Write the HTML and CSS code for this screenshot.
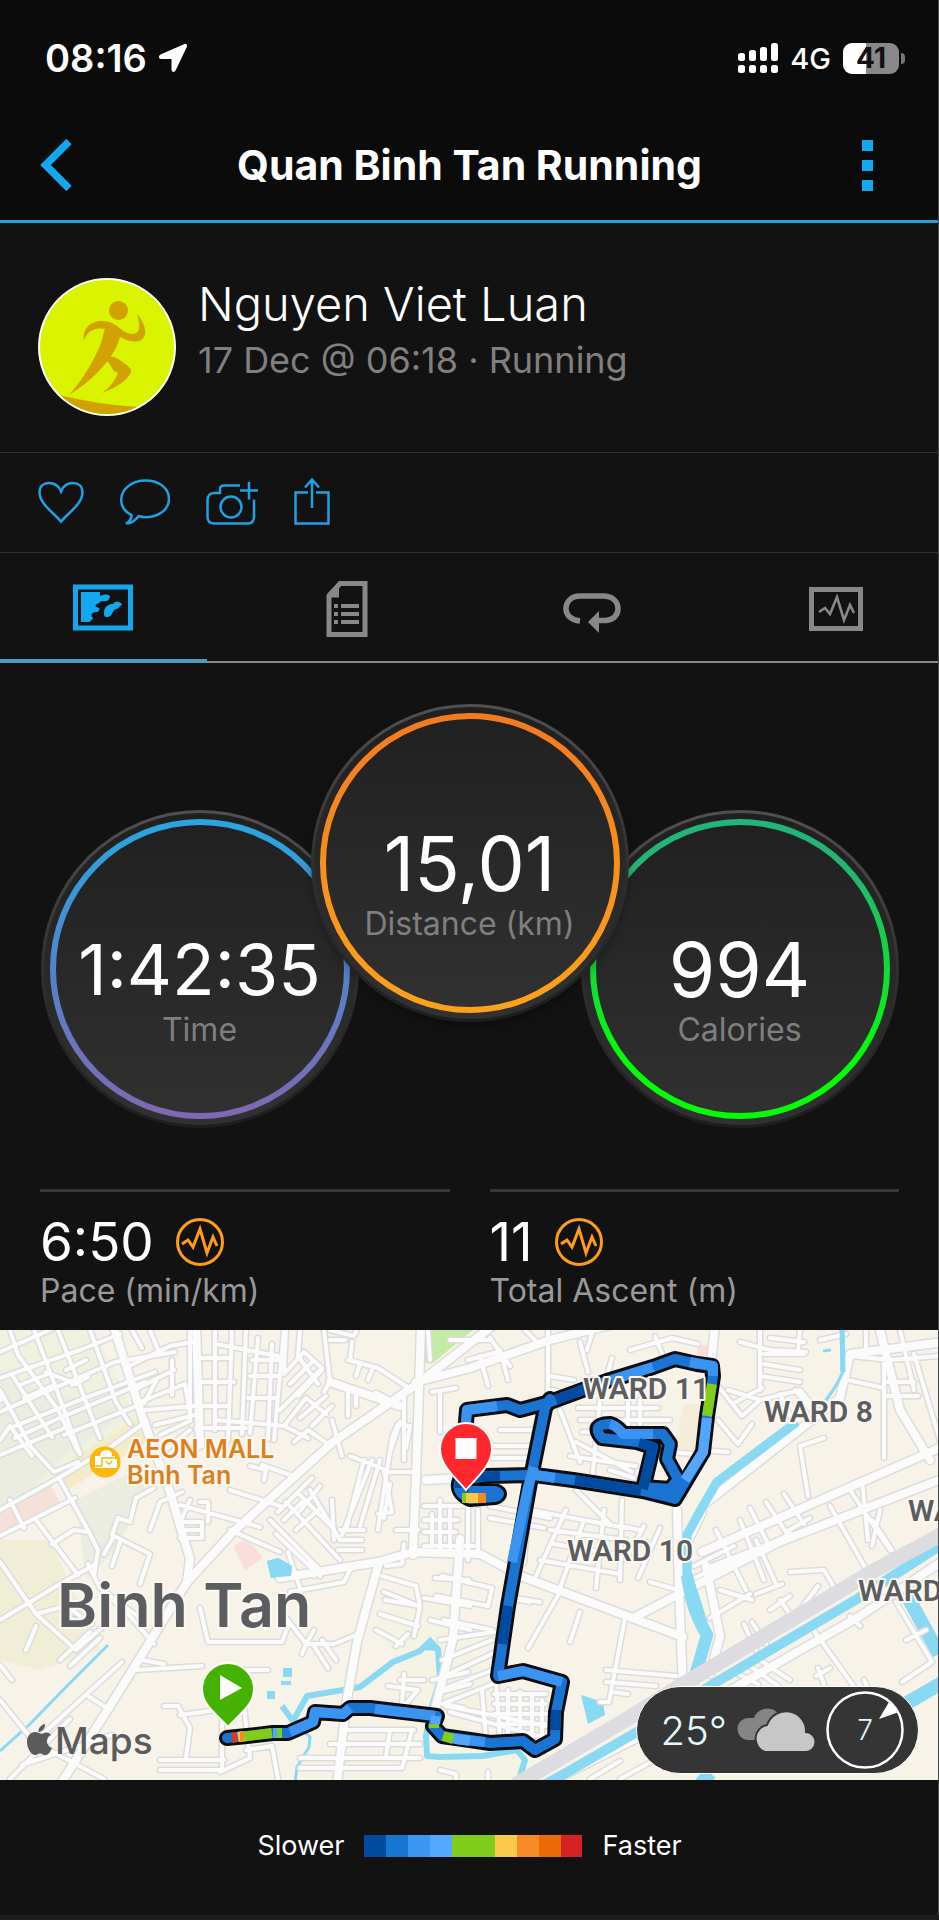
FILE: index.html
```html
<!DOCTYPE html>
<html lang="en">
<head>
<meta charset="utf-8">
<meta name="viewport" content="width=device-width, initial-scale=1">
<title>Quan Binh Tan Running</title>
<link rel="stylesheet" href="styles.css">
</head>
<body>
<div class="screen">
  <header class="header">
    <div class="status">
      <div class="status-left">
        <time class="clock">08:16</time>
        <svg width="30" height="30" viewBox="0 0 30 30" aria-hidden="true"><path d="M26.500 1 2.500 11.500C.3 12.600.6 16 3 16h10.500v10.500c0 2.800 3 3.300 4.200.8L28.800 4c.9-2-.5-3.700-2.300-3z" fill="#fff"/></svg>
      </div>
      <div class="status-right">
        <svg width="40" height="30" viewBox="0 0 40 30" fill="#fff" aria-hidden="true"><rect x="0" y="10" width="7" height="8" rx="2.500"/><rect x="11" y="7" width="7" height="11" rx="2.500"/><rect x="22" y="4" width="7" height="14" rx="2.500"/><rect x="33" y="0" width="7" height="18" rx="2.500"/><rect x="0" y="22" width="7" height="8" rx="2.500"/><rect x="11" y="22" width="7" height="8" rx="2.500"/><rect x="22" y="22" width="7" height="8" rx="2.500"/><rect x="33" y="22" width="7" height="8" rx="2.500"/></svg>
        <span class="network">4G</span>
        <span class="battery"><span class="battery-body">41</span><i class="battery-tip"></i></span>
      </div>
    </div>
    <nav class="titlebar">
      <button class="nav-button" aria-label="Back"><svg width="32" height="52" viewBox="0 0 32 52"><path d="M29 2.500 5.500 26 29 49.500" fill="none" stroke="#12a7ee" stroke-width="7.500"/></svg></button>
      <h1>Quan Binh Tan Running</h1>
      <button class="nav-button nav-more" aria-label="More options"><svg width="11" height="52" viewBox="0 0 11 52" fill="#12a7ee"><path d="M0 1h11v11H0zM0 21h11v11H0zM0 41h11v11H0z"/></svg></button>
    </nav>
  </header>

  <section class="profile">
    <svg class="avatar" viewBox="0 0 138 138" role="img" aria-label="Runner">
      <defs><clipPath id="face"><circle cx="69" cy="69" r="67"/></clipPath></defs>
      <circle cx="69" cy="69" r="69" fill="#fff"/>
      <g clip-path="url(#face)"><path fill="#daf400" d="M0 0h138v138H0z"/>
      <g fill="#d2a203"><circle cx="80.500" cy="32.500" r="9.500"/>
      <path d="M46 63c-2-12 6-20 18-20 9 0 14 4 20 9 8 6 15 5 17-1 1-5-1-10-2-15 6 7 9 14 8 20-2 9-12 10-25 3-3 12-12 25-22 35-9 9-18 16-29 23 14-16 25-34 32-52 2-6 2-10 4-14-9-2-18 1-21 12z"/>
      <path d="M69 83c2-8 10-4 22 6 4 4 2 7-3 12-6 6-14 10-24 14 7-5 13-12 16-20-6-2-6-7-11-12z"/>
      <path d="M20 117c24 5 48 10 80 12l-10 9H20z"/></g></g>
    </svg>
    <div class="who"><h2>Nguyen Viet Luan</h2><p>17 Dec @ 06:18 · Running</p></div>
  </section>

  <section class="actions" aria-label="Actions">
    <button aria-label="Like"><svg width="46" height="50" viewBox="0 0 46 50"><path d="M23 43.500C17 36 1.500 26 1.500 14.500c0-6 4-9.500 9.500-9.500 6 0 10 3.500 12 8.500C25 8.500 29 5 35 5c5.500 0 9.500 3.500 9.500 9.500C44.500 26 29 36 23 43.500z"/></svg></button>
    <button aria-label="Comment"><svg width="50" height="50" viewBox="0 0 50 50"><path d="M11.500 37.200C5 33.700 1.200 28 1.200 22 1.200 11 12 2.500 25.500 2.500S49 10 49 21 38 39.200 25 39.200c-3 0-4.600-.5-6.500-1-3 4-6.500 7.300-12.500 7.300 4-2 5.500-5 5.500-8.300z"/></svg></button>
    <button aria-label="Add photo"><svg width="52" height="50" viewBox="0 0 52 50"><path d="M34 7.500H18c-3 0-4 1-4 4v3.500H9c-5 0-7.500 3-7.500 7v17c0 4.500 3 6.500 7 6.500h33c4.500 0 6.500-3 6.500-7V21.500M34 12.500h18M43 4v17.500"/><circle cx="25" cy="29" r="10.500"/></svg></button>
    <button aria-label="Share"><svg width="36" height="50" viewBox="0 0 36 50"><path d="M14 14.500H1.500v31h33v-31H22M18 30V1.500M11 9.500l7-8 7 8"/></svg></button>
  </section>

  <nav class="tabs" aria-label="Activity views">
    <button class="tab active" aria-label="Map"><svg width="60" height="56" viewBox="0 0 60 56"><path d="M2.500 7h55v41h-55z" fill="none" stroke="#12a7ee" stroke-width="5"/><path d="M8 12h19v4c4-2 8-2 10 0 0 5-5 6-9 5-1 3-7 2-5 6 5 0 4 4 1 5-5 0-7 3-4 6 0 2-3 2-3 4H8zM31 33c0-7 5-9 9-9 2-4 9-2 9 1-3 0-2 4-6 4-4 1-3 8-9 8-3 0-3-2-3-4z" fill="#12a7ee"/></svg></button>
    <button class="tab" aria-label="Details"><svg width="42" height="56" viewBox="0 0 42 56"><path d="M14 2.500h25v51H3V15z" fill="none" stroke="#888" stroke-width="5"/><path d="M13 1v15.500H1V13z"/><path d="M8 23h4v4H8zM15 23h18v4H15zM8 31h4v4H8zM15 31h18v4H15zM8 39h4v4H8zM15 39h18v4H15z"/></svg></button>
    <button class="tab" aria-label="Laps"><svg width="58" height="56" viewBox="0 0 58 56"><path d="M17 40C8 39 3 34 3 28c0-8 6-13 14-13h23c9 0 15 5 15 13 0 7-6 11.500-13 11.500h-8" fill="none" stroke="#888" stroke-width="5.500"/><path d="M36 30v22L25 41z"/></svg></button>
    <button class="tab" aria-label="Charts"><svg width="54" height="56" viewBox="0 0 54 56"><path d="M2.500 8.500h49v39h-49z" fill="none" stroke="#888" stroke-width="5"/><path d="m10 31 6-4 5 6 7-17 7 23 6-15 4 8" fill="none" stroke="#888" stroke-width="2.600"/></svg></button>
  </nav>

  <section class="gauges" aria-label="Summary">
    <div class="gauge gauge-time">
      <svg class="ring" viewBox="0 0 318 318" aria-hidden="true"><defs>
        <linearGradient id="plate" x2="0" y2="1"><stop stop-color="#202020"/><stop offset="1" stop-color="#313131"/></linearGradient>
        <linearGradient id="rim" x2="0" y2="1"><stop stop-color="#505050"/><stop offset=".5" stop-color="#303030"/><stop offset="1" stop-color="#1e1e1e"/></linearGradient>
        <linearGradient id="blue" x2="0" y2="1"><stop stop-color="#2aa5e0"/><stop offset=".5" stop-color="#5284ca"/><stop offset="1" stop-color="#8068b2"/></linearGradient>
        <linearGradient id="orange" x2="0" y2="1"><stop stop-color="#f47a20"/><stop offset="1" stop-color="#fba21c"/></linearGradient>
        <linearGradient id="green" x2="0" y2="1"><stop stop-color="#22b57c"/><stop offset=".15" stop-color="#22b573"/><stop offset=".8" stop-color="#05fb08"/></linearGradient></defs>
        <circle cx="159" cy="159" r="157.500" fill="url(#plate)" stroke="url(#rim)" stroke-width="3"/><circle cx="159" cy="159" r="147" fill="none" stroke="url(#blue)" stroke-width="6"/></svg>
      <div class="reading"><strong class="long">1:42:35</strong><span>Time</span></div>
    </div>
    <div class="gauge gauge-distance">
      <svg class="ring" viewBox="0 0 318 318" aria-hidden="true"><circle cx="159" cy="159" r="157.500" fill="url(#plate)" stroke="url(#rim)" stroke-width="3"/><circle cx="159" cy="159" r="147" fill="none" stroke="url(#orange)" stroke-width="6"/></svg>
      <div class="reading"><strong>15,01</strong><span>Distance (km)</span></div>
    </div>
    <div class="gauge gauge-calories">
      <svg class="ring" viewBox="0 0 318 318" aria-hidden="true"><circle cx="159" cy="159" r="157.500" fill="url(#plate)" stroke="url(#rim)" stroke-width="3"/><circle cx="159" cy="159" r="147" fill="none" stroke="url(#green)" stroke-width="6"/></svg>
      <div class="reading"><strong>994</strong><span>Calories</span></div>
    </div>
  </section>

  <section class="stats" aria-label="Statistics">
    <div class="stat"><div class="stat-top"><strong>6:50</strong><button aria-label="Pace chart"><svg width="48" height="48" viewBox="0 0 48 48"><circle cx="24" cy="24" r="22.500"/><path d="m6 26 6-4 5 7 7-18 7 24 6-16 4 9"/></svg></button></div><span class="stat-label">Pace (min/km)</span></div>
    <div class="stat"><div class="stat-top"><strong>11</strong><button aria-label="Ascent chart"><svg width="48" height="48" viewBox="0 0 48 48"><circle cx="24" cy="24" r="22.500"/><path d="m6 26 6-4 5 7 7-18 7 24 6-16 4 9"/></svg></button></div><span class="stat-label">Total Ascent (m)</span></div>
  </section>

  <section class="map" aria-label="Route map">
    <svg class="map-canvas" viewBox="0 0 939 450" preserveAspectRatio="xMidYMid slice">
      <defs>
        <g id="minor">
          <!-- north-west district -->
          <path d="M0 22 50 0M0 48 80 20 120 4M0 82l50-22 65-28 60-10M10 98l75-30 70-26M15 108l40-18 90-38M0 60l30 55M12 45l40 62M10 0l8 25 40 55 20 42M34 0l22 58 24 66M58 0l42 108M90 0l26 72 14 22M0 110l10-14 22 30M0 125l65-27M30 116l24 26 24-10M64 105l80-32 12-22M20 55l30-12M24 68l28-12M46 42l30 12M66 40l20-10M72 55l16-8"/>
          <path d="M0 180 62 146l50-30 35-25M10 170l14 28M0 206l75-38M36 190l42 55M52 214l22-14 14 2M60 150l28 50 10 20-4 26M0 290l60-36 36-20M0 232l36 52 40 36 30-26M36 284l30-8 26 18M26 320l10-24M12 350l-12-15M0 370l34 42 88-80M34 412l70 37M10 449l60-60M22 435l90-30M60 330l30-28M70 336l30-28M88 234l12 24 30 28 24 28M100 258l40 30M118 188l12 4 6-24 18-10M112 205l6-17M104 224l10-18 36 18-10 30M120 212l-8 24M150 200l10-28 22-10"/>
          <path d="M125 38l45-22 22-4M134 60l40-20M140 72l45-18 5 30M145 80l48-4M155 95l40-10M160 105l30-14M165 120l25-20M190 0v90M172 30v35M150 0l8 20M132 0l10 18M192 76h36M200 28h30M198 52h36M196 98h50M215 0v100M232 0l-4 110M246 0l-4 104M258 8l-8 95M272 14l-4 95M284 0l-10 110M216 14l62 12M252 30h30M250 46h28M248 68h28M216 90l68 6 24 12M284 96l22-28 20 16M284 44l20-22 18 16M290 54l22-22M298 66l24-26M280 80l40-40M300 88l26-22M312 96l20-20M294 112l14-12 20 14M286 0l-2 40M300 0l-2 26 20 28"/>
          <path d="M324 0l6 52 60 20M330 52l-6 10M352 12l-2 18 14 4M360 34l-4 12M372 40l-4 10M348 30l30 8 34 22M348 60v26M356 62v14M330 10h15M332 90l10 36M350 126l36 14M392 108l-14 92M400 92l-10 30M392 108l6-14 12 2-4 22M364 130l-18 70M380 130l-20 66M372 130l-30 75M384 140l8 42-14 2M390 142h28M396 200h22M404 60v70M440 62v40M390 154l-6 34M180 175l80 22M190 170l-8 18M200 172h8v20M180 192h22v16h-22M180 200h20M230 160l50 16M250 136l16 4-2 10M262 135l34 12M286 172l54 58M270 190l50 50M300 165l34 34M310 160l30 50M278 182l34-34M284 190l20-20M296 200l22-20M276 204l44 42M320 156l-20 25M334 210l-2-40M340 200h24M340 210h22M338 220h24"/>
          <path d="M330 0l24 6 8-18M428 0l2 30M450 10h40M432 62l24-4M468 30l30-8M480 26l8 30M500 20l8 30M490 8l20 28M525 0l10 10M548 0v62M593 0l-6 20M655 6l8 20M630 20l42-12 26 6M612 28l-12 42M580 12l8 30M550 46l24 4M552 60l22 6M578 78h80M580 90h90M582 102h14M500 100h36M490 116h42M486 128h46M576 112l56 30M570 126l66 10M560 80l20 52M600 70l-8 80M628 72v30M640 70v26M610 140l24 8M648 120l46 4"/>
          <!-- centre streets -->
          <path d="M432 184v30M450 180v45M424 190h34M424 202h32M440 170v50M468 170v60M478 180v46M424 176h46M424 216h50M490 176l60 12M490 188l54 10M530 180l96 18M550 200l76 10M554 214l70 12M540 230l80 14M566 180l-30 66M584 190l-24 68M604 180l-8 78M622 170l-2 80M640 200l-20 -4M644 196l-18 34M646 212l-20 4M660 198l-22 50M576 160l34 34M650 252l28 8M560 262l-32 56M580 282l-10 30M625 288l-16 84M606 340l70 6M606 352l50 4M612 362l16 2M600 372h6M530 272l-22 -4"/>
          <path d="M290 248l78-16M290 262l54-10 8-16M288 222l12 36M310 230l4 16M230 200l50 22M200 278l8 34h74l6-16M280 280l26 34 8-14M306 314l28 0 24-10M306 314l-4 10M314 316l14 22M322 310l14 20M136 340l66-4M142 330l22 4M88 366l22 14M180 385l60-8M164 376h14l12 22-4 30M220 340h48M222 390v50M244 378l6 50-30 14M246 420l26 -4 6 33M160 430h64M160 440h60M300 428h120M300 438h100M330 414h90M344 400h70M385 270l35 6M380 284l38 12M382 246l34 10 4 20-6 30M384 262l30 12M376 300l26 14M396 316l12-12M386 236l16-2 2-20M400 350h24M404 344l-2 30M388 356l30 4-12 14M390 400l-4 26M412 400l-10 38M435 248l34 2M424 268l46 8M430 290l40 10M432 350l36-8M440 362l30-8M444 374l20 4"/>
          <path d="M442 246l50 12-4 18-52-10M444 290l48 10M440 310l54-8M442 330l50-20M444 346l52-24M446 358l52-20M442 374l56-22M446 376l100 20M450 382l96 26M482 360l4 50M496 350l4 60M508 360v48M520 362v48M532 364v44M542 370v38M494 364h52M494 374h52M494 384h52M494 394h52M440 440l16 4v6M488 442v8M516 268l24 4"/>
          <!-- eastern streets -->
          <path d="M760 0v60M740 12l30 8 36 2M770 8l34 4M764 24h40M764 34l36 6M760 46l40 6M800 0l-2 20M728 60l32 10 40-10 20 24M718 56l24 30 18-16M732 74l30-16M718 90l20 24 14-20M700 120l28 2M780 64l14 30M795 60l18 22M850 26l40 4 49-4M884 28v100M914 24l30 100M884 66h34M884 52h30M848 50l36 8M900 0l14 60M820 10l26 -6M866 0v18M800 116l24-8M800 116l8 50M784 164l20 30M766 172l20 30 24-14M750 178l20 40M830 176l40 70M850 160l40 60M862 150l6 60M872 190l20 30M880 180l-8 36M756 210l20 44M716 200l30 60M740 190l24 60M694 236l40-20M690 250l26-12M710 288l40-24M720 260l32 10M790 242l34-2 14 24M756 264l26 -10M770 280l20-14M780 270l10 14M800 280l18-24M744 294l12 26M752 292l14 22M812 298l50 70M896 272l36 60-30 20M906 310l20 -10M850 286l10 10M816 346l14 -8M826 360l-8 -22M864 350l12 24M760 330l30 20M750 336l28 20M738 344l20 10M710 426l30 14M620 449l40 -22M590 449l30-18"/>
        </g>
        <g id="major">
          <path d="M500-10 420 52 333 112 233 202 187 252 110 376 60 455"/>
          <path d="M113-5 143 89 170 162 190 229 187 252M196-5l4 120"/>
          <path d="M421-5 418 90 413 225M396 75l-20-10M330 52l70 24M416 52l54-14 80-28 60-15"/>
          <path d="M280 248l98-16 35-10 67 2 43 23 104 39 56 21M378 236l-21 76-10 57-10 85M460 209l-7 100-20 78"/>
          <path d="M790 206 683 262l-50 26M677 180l2 80 4 100M715-5l-8 80"/>
          <path d="M707 172 840 68l10-44 94-12M702 222 944 116M707 240 944 148M702 182l-24 50M706 236l14 70-10 38"/>
          <path d="M544 455 720 366 860 286 944 230M0 68l-20-5M880 0l20 80 30 50M426 150l36-2M550 72l-22 90-6 70"/>
        </g>
        <g id="river">
          <path d="M842-5l1 47" stroke-width="5"/><path d="M843 42q-8 18-22 34" stroke-width="3"/><path d="M797 92 717 152 703 176 687 205v37l20 64-14 42" stroke-width="9"/><path d="M687 245q4 34 20 60l-14 48" stroke-width="12"/>
        </g>
        <g id="track">
          <path d="M227 408l20-2 26-3 15 0 25-11 2-10 28 2 7-6h20l67 8-4 10 9 10 28 4 20 3 33-2 12 9 20-11 1-27 6-30-39-11-25 5 10-70 10-56 12-68 15-74 5-9"/>
          <path d="M466 92l1-12 40-5 13 5 30-8 57-21 46-14 22-8 22 5 15 2 1 10-6 40-4 36-28 47-32-8-70-11-38-5-48 1-27 4q-5 12 10 19l25-2q8-3 0-6l-22 0"/>
          <path d="M643 159l10-42-16-5-35-4q-12-14 8-14 7 2 13 10l40 0 7 10-3 15 11 20-8 10-27-2"/>
        </g>
      </defs>
      <path fill="#f8f3e9" d="M0 0h939v450H0z"/>
      <path fill="#f0f2e0" d="M0 0h95l45 95-78 52-62 36z"/><path fill="#eaede0" d="M0 50 130 80 60 130 0 190zM76 170l60-30 10 20-30 60-30 30z"/><path fill="#f1eed8" d="M0 210h50l50 110-60 20-40-10z"/><path fill="#f4f3e4" d="M378 290l70-40 40 120-60 80h90l10-24-110-30z"/>
      <path fill="#f4ebc9" d="M58 138 135 90l12 22-80 48z"/><path fill="#f6e1d8" d="M0 176 48 150l12 22-60 36z"/>
      <path fill="#fadedd" d="M233 216l14-8 16 20-18 12zM697 15h12v14h-12z"/><path fill="#f5ecda" d="M684 74h20l-10 52-20-8z"/>
      <path fill="#c5eaa5" d="M427 0h46l-40 33h-10z"/>
      <g class="water">
        <use href="#river"/>
        <path d="M282 376l11 15 14-25 30-5 23-4 33-25 27-11 10-10 8 8 2 30-8 27-6 30 1 20 13 1 43-1 34-6 8 10-5 16" stroke-width="6"/>
        <path d="M293 391l17 16-1 10-12 20-2 16M108 315 67 356 30 394 0 421M856 27l50-7M823 21l8-1" stroke-width="3"/>
        <path class="lake" d="M267 231l11-3 14 8-1 10-20 2zM283 338h9v9h-9zM281 351h10v4h-10zM267 361h8v8h-8zM581 365l22 7 2 13-17 9zM420 320l11-13 8 14zM72 286l5-2-1 4z"/>
        <path d="M905 262l34 62M900 377l45-26M700 455l10-12" stroke-width="14"/>
      </g>
      <use href="#minor" class="road" stroke="#dcdcdd" stroke-width="7"/>
      <use href="#major" class="road" stroke="#dcdcdd" stroke-width="11"/>
      <use href="#minor" class="road" stroke="#fbfbfb" stroke-width="4"/>
      <use href="#major" class="road" stroke="#fbfbfb" stroke-width="8"/>
      <path class="lake" fill="#89d9f2" d="M267 231l11-3 14 8-1 10-20 2z"/>
      <g class="water"><use href="#river"/><path d="M944 213 857 269 767 322 710 356 637 402 545 455" stroke-width="10"/></g>
      <path d="M944 203 870 243 680 356 627 389 515 455" fill="none" stroke="#dcdce1" stroke-width="15"/>
      <use href="#track" class="road" stroke="#0a0d12" stroke-width="16"/>
      <use href="#track" class="road" stroke="#1c74d2" stroke-width="10"/>
      <g class="speed">
        <path stroke="#3b94f2" d="M290 402l23-10 2-10 28 2 7-6M375 379l60 7M485 412l-30-3M498 346l25-5 39 11M512 232l16-75 6-20M466 92l1-12 30-4M612 50l41-13M690 32l23 4v10M610 94q7 2 13 10l30 0M535 145l20 3"/>
        <path stroke="#55a6fa" d="M436 386l-1 8M450 408l20 3M707 88l-4 34-18 28M273 403h4"/>
        <path stroke="#004a9f" d="M556 70l30-12M508 276l-6 38M555 400l1-20M575 150l66 11M643 159l10-42-14-4M470 147l30-1M460 150v8"/>
        <path stroke="#82cc1b" d="M240 407l32-4M277 403h5M712 54l-5 32M434 394v4M443 406l10 3M462 168h5"/>
        <path stroke="#e43723" d="M232 408l5-1"/><path stroke="#fbc84a" d="M238 407l6-1M466 168l14 0"/><path stroke="#f78921" d="M240 406h4M478 168h8"/>
      </g>
      <g class="pin"><path fill="#ff282c" d="M466 160C456 148 440 136 440 119a26 26 0 0 1 52 0c0 17-16 29-26 41z"/><path fill="#fff" stroke="none" d="M455.500 108h21v21h-21z"/></g>
      <g class="pin"><path fill="#46b200" d="M228 397C218 385 202 376 202 359a26 26 0 0 1 52 0c0 17-16 26-26 38z"/><path fill="#fff" stroke="none" d="M220 345v25l22-12z"/></g>
      <circle cx="105" cy="132" r="15.500" fill="#fcb70a"/><path fill="#fff" d="M95 126h5q1-7 7-6t5 6h3v3h2v9H95z"/><path d="M94 136h8v-8h14" fill="none" stroke="#fcb70a" stroke-width="1.500"/><path d="M106 131q3 6 6 0" fill="none" stroke="#fcb70a" stroke-width="1.500"/>
      <g class="poi"><text x="127" y="128">AEON MALL</text><text x="127" y="154">Binh Tan</text></g>
      <text class="city" x="57" y="297">Binh Tan</text>
      <g class="ward"><text x="583" y="69">WARD 11</text><text x="764" y="92">WARD 8</text><text x="567" y="231">WARD 10</text><text x="908" y="191">WARD</text><text x="858" y="271">WARD</text></g>
      <path fill="#5b5b5b" d="M45 394c.5 4-3 8-6.500 8-.5-4 3-7.500 6.500-8zM51 405c-6 3-5 11 1 13-2 5-5 8-8 7-3-2-5-2-8 0-4 1-9-6-9-13 0-9 7-12 12-9 2 1 3 1 5 0 3-1 6 0 7 2z"/>
      <text class="brand" x="55" y="424">Maps</text>
    </svg>
    <div class="weather">
      <span class="temperature">25°</span>
      <svg width="78" height="44" viewBox="0 0 78 44" aria-hidden="true"><path fill="#858585" d="M11 32a11 11 0 0 1 1-22h5A14 14 0 0 1 42 7L32 18l-14 14z"/><path fill="#c7c7c7" stroke="#353535" stroke-width="2" d="M28 44a14 14 0 0 1 2-27A20 20 0 0 1 69 24a10 10 0 0 1-1 20z"/></svg>
      <div class="wind"><svg viewBox="0 0 80 80" aria-hidden="true"><circle cx="40" cy="40" r="37.500" fill="none" stroke="#fff" stroke-width="2.500"/><path fill="#fff" d="M64 12l10 10-20 7z"/></svg><span>7</span></div>
    </div>
  </section>

  <footer class="legend">
    <span>Slower</span>
    <div class="scale" role="img" aria-label="Speed scale"><i class="s1"></i><i class="s2"></i><i class="s3"></i><i class="s4"></i><i class="s5"></i><i class="s5"></i><i class="s6"></i><i class="s7"></i><i class="s8"></i><i class="s9"></i></div>
    <span>Faster</span>
  </footer>
</div>
</body>
</html>
```
FILE: styles.css
```css
* { box-sizing: border-box; }
body { margin: 0; background: #1c1c1c; color: #fff; font-family: Inter, "Liberation Sans", sans-serif; }
h1, h2, p { margin: 0; }
button { padding: 0; border: 0; background: none; color: inherit; font: inherit; cursor: pointer; }
svg { display: block; }

.screen { position: relative; background: #121212; }
.screen::after { content: ""; position: absolute; top: 0; right: 0; bottom: 0; width: 1px; background: #4a4a4a; }

.header { background: #0b0b0b; border-bottom: 3px solid #239fdd; }
.status { display: flex; align-items: center; justify-content: space-between; padding: 36px 34px 0 45px; height: 80px; }
.status-left, .status-right { display: flex; align-items: center; gap: 11px; }
.clock { font-size: 38px; font-weight: 600; line-height: 44px; }
.status-right { gap: 12px; }
.network { font-size: 29px; font-weight: 500; }
.battery { display: flex; align-items: center; gap: 2px; }
.battery-body { width: 56px; height: 31px; border-radius: 9px; background: linear-gradient(90deg, #fff 41%, #888 41%); color: #111; font-size: 28px; font-weight: 700; line-height: 31px; text-align: center; }
.battery-tip { width: 4px; height: 11px; border-radius: 0 4px 4px 0; background: #777; }

.titlebar { display: grid; grid-template-columns: 64px 1fr 64px; align-items: center; height: 140px; padding: 30px 40px 0; }
.titlebar h1 { font-size: 41px; font-weight: 700; line-height: 52px; text-align: center; white-space: nowrap; }
.nav-more { justify-self: center; }

.profile { display: flex; align-items: flex-start; gap: 22px; padding: 55px 38px 36px; border-bottom: 1px solid #303030; }
.avatar { width: 138px; height: 138px; }
.who h2 { font-size: 47px; font-weight: 300; line-height: 52px; }
.who p { margin-top: 8px; color: #808080; font-size: 36px; line-height: 44px; }

.actions { display: flex; align-items: center; gap: 36px; height: 100px; padding: 0 38px; border-bottom: 1px solid #303030; }
.actions svg { fill: none; stroke: #20a2e2; stroke-width: 2.5; }

.tabs { display: flex; justify-content: space-between; height: 110px; border-bottom: 2px solid #888; }
.tab { display: flex; align-items: center; justify-content: center; flex: 0 0 22%; padding-top: 3px; }
.tab svg { fill: #888; }
.tab.active { margin-bottom: -2px; border-bottom: 4px solid #5298c4; }

.gauges { display: flex; justify-content: center; padding: 41px 0 61px; }
.gauge { position: relative; flex: 0 0 318px; height: 318px; margin-top: 106px; }
.gauge-distance { z-index: 1; margin: 0 -48px 106px; border-radius: 50%; box-shadow: 0 5px 8px rgb(0 0 0 / 25%); }
.ring { width: 100%; height: 100%; }
.reading { position: absolute; inset: 0; display: flex; flex-direction: column; align-items: center; padding-top: 118px; }
.reading strong { font-size: 75px; font-weight: 400; line-height: 84px; }
.reading .long { font-size: 70px; }
.reading span { color: #7f7f7f; font-size: 32px; line-height: 36px; }

.stats { display: grid; grid-template-columns: 1fr 1fr; gap: 40px; padding: 0 40px 20px; }
.stat { border-top: 3px solid #373737; padding-top: 20px; }
.stat-top { display: flex; align-items: center; gap: 22px; height: 60px; }
.stat-top strong { font-size: 53px; font-weight: 400; }
.stat-top svg { fill: none; stroke: #ff9d17; stroke-width: 3; }
.stat-label { display: block; color: #999; font-size: 32px; line-height: 38px; }

.map { position: relative; overflow: hidden; }
.map-canvas { width: 100%; height: auto; }
.road, .speed, .water { fill: none; stroke-linejoin: round; }
.road { stroke-linecap: round; }
.water { stroke: #89d9f2; }
.lake { fill: #89d9f2; stroke: none; }
.speed { stroke-width: 10; }
.pin { stroke: #fff; stroke-width: 2; }
.map text { paint-order: stroke; stroke: #fbf8f2; stroke-width: 4; stroke-linejoin: round; fill: #5b5d60; }
.map .poi text { fill: #dc801d; font-size: 25px; font-weight: 600; }
.map .city { font-size: 61px; font-weight: 600; }
.map .ward text { font-family: Roboto, "Noto Sans", sans-serif; font-size: 30px; font-weight: 600; }
.map .brand { font-size: 37px; font-weight: 500; stroke: none; fill: #5b5b5b; }

.weather { position: absolute; right: 20px; bottom: 6px; display: flex; align-items: center; gap: 10px; height: 88px; padding: 0 13px 0 24px; border: 1px solid #fff; border-radius: 44px; background: #353535; color: #e2f8fb; }
.temperature { font-size: 40px; font-weight: 300; }
.wind { position: relative; display: grid; place-items: center; width: 80px; height: 80px; }
.wind svg { position: absolute; inset: 0; }
.wind span { font-size: 28px; font-weight: 300; }

.legend { display: flex; align-items: center; justify-content: center; gap: 20px; height: 135px; padding-bottom: 4px; font-size: 27px; line-height: 36px; }
.scale { display: flex; width: 218px; height: 22px; }
.scale i { flex: 1; }
.s1 { background: #004a9f; }
.s2 { background: #1876d3; }
.s3 { background: #3c96f5; }
.s4 { background: #55a8ff; }
.s5 { background: #80cc1b; }
.s6 { background: #fbca4a; }
.s7 { background: #f98b27; }
.s8 { background: #ed6b06; }
.s9 { background: #d62222; }
```
